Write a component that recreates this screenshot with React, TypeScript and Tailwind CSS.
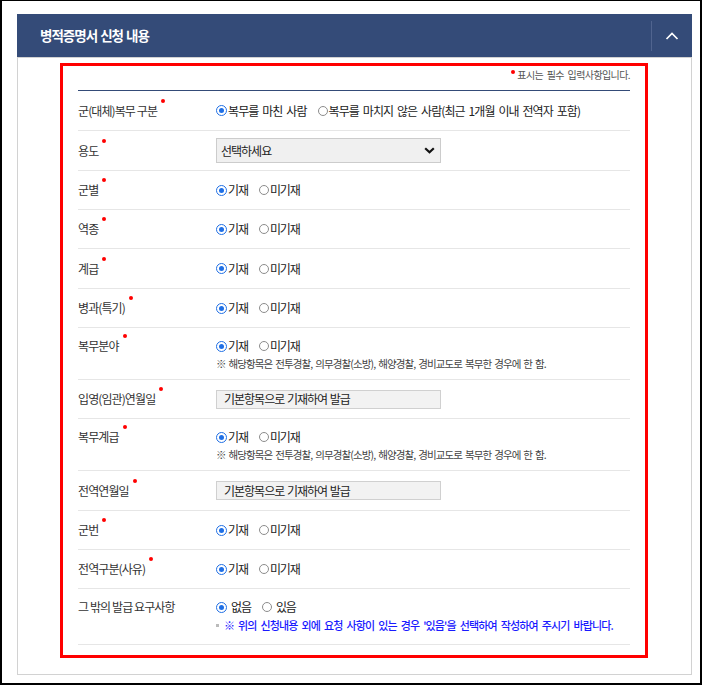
import React from "react";

const F = "font-['Noto_Sans_CJK_KR','Noto_Sans',sans-serif]";

function Dot() {
  return (
    <span className="relative -top-[3px] ml-[4px] inline-block h-[4px] w-[4px] rounded-full bg-[#ff0000] align-top" />
  );
}

function Radio({ checked }: { checked?: boolean }) {
  return checked ? (
    <span className="inline-flex h-[11px] w-[11px] shrink-0 items-center justify-center rounded-full border-[1.5px] border-[#1f6fe5] bg-white">
      <span className="h-[5px] w-[5px] rounded-full bg-[#1f6fe5]" />
    </span>
  ) : (
    <span className="inline-block h-[10px] w-[10px] shrink-0 rounded-full border border-[#8c8c8c] bg-white" />
  );
}

function Opt({ checked, label }: { checked?: boolean; label: string }) {
  return (
    <span className="inline-flex items-center">
      <Radio checked={checked} />
      <span className="ml-[1px]">{label}</span>
    </span>
  );
}

function YesNo() {
  return (
    <div className="flex items-center gap-[11px] text-[12px] leading-[18px] tracking-[-1.1px] text-[#222]">
      <Opt checked label="기재" />
      <Opt label="미기재" />
    </div>
  );
}

function Note() {
  return (
    <div className="mt-[2px] text-[10.5px] leading-[13px] tracking-[-0.9px] text-[#444] [word-spacing:1.5px]">
      ※ 해당항목은 전투경찰, 의무경찰(소방), 해양경찰, 경비교도로 복무한 경우에 한 함.
    </div>
  );
}

function Row({
  label,
  req = true,
  h,
  top = false,
  children,
}: {
  label: string;
  req?: boolean;
  h: string;
  top?: boolean;
  children: React.ReactNode;
}) {
  return (
    <div
      className={`flex border-b border-[#e6e6e6] ${h} ${top ? "items-start pt-[9px]" : "items-center"}`}
    >
      <div className="w-[138px] shrink-0 text-[12px] leading-[18px] tracking-[-0.9px] text-[#333]">
        {label}
        {req && <Dot />}
      </div>
      <div className="min-w-0 flex-1">{children}</div>
    </div>
  );
}

function Box({ text }: { text: string }) {
  return (
    <div className="flex h-[19px] w-[225px] items-center border border-[#d0d0d0] bg-[#f2f2f2] pl-[7px] text-[12px] tracking-[-1px] text-[#222] [word-spacing:1px]">
      {text}
    </div>
  );
}

export default function App() {
  return (
    <div
      className={`${F} h-[685px] w-[702px] border-b-2 border-l-2 border-r-2 border-t border-black bg-white pl-[15px] pt-[13px]`}
    >
      <div className="w-[675px]">
        <div className="flex h-[43px] items-center bg-[#344b78]">
          <div className="flex-1 pl-[23px] text-[13.5px] font-bold tracking-[-1px] text-white [word-spacing:1px]">
            병적증명서 신청 내용
          </div>
          <div className="flex h-[30px] w-[41px] items-center justify-center border-l border-[#50648f]">
            <svg width="14" height="8" viewBox="0 0 14 8" fill="none">
              <path d="M1.5 7 L7 1.5 L12.5 7" stroke="#ffffff" strokeWidth="1.7" />
            </svg>
          </div>
        </div>
        <div className="border border-[#d2d2d2] pb-[16px] pl-[42px] pt-[5px]">
          <div className="w-[588px] border-[3px] border-[#ff0000] px-[15px] pb-[10px]">
            <div className="flex items-center justify-end pt-[2px] text-[10px] leading-[14px] tracking-[-0.6px] text-[#555] [word-spacing:2px]">
              <span className="relative -top-[3px] mr-[2px] inline-block h-[4px] w-[4px] rounded-full bg-[#ff0000]" />
              표시는 필수 입력사항입니다.
            </div>
            <div className="mt-[8px] border-t border-[#344b78]" />

            <Row label="군(대체)복무 구분" h="h-[40px]">
              <div className="flex items-center gap-[11px] text-[12px] leading-[18px] tracking-[-0.9px] text-[#222] [word-spacing:2px]">
                <Opt checked label="복무를 마친 사람" />
                <Opt label="복무를 마치지 않은 사람(최근 1개월 이내 전역자 포함)" />
              </div>
            </Row>

            <Row label="용도" h="h-[40px]">
              <div className="flex h-[25px] w-[225px] items-center justify-between border border-[#cccccc] bg-[#f0f0f0] pl-[4px] pr-[5px] text-[12px] tracking-[-1px] text-[#222]">
                <span>선택하세요</span>
                <svg width="11" height="7" viewBox="0 0 11 7" fill="none">
                  <path d="M1.2 1.2 L5.5 5.3 L9.8 1.2" stroke="#111111" strokeWidth="2.2" />
                </svg>
              </div>
            </Row>

            <Row label="군별" h="h-[39px]">
              <YesNo />
            </Row>
            <Row label="역종" h="h-[39px]">
              <YesNo />
            </Row>
            <Row label="계급" h="h-[40px]">
              <YesNo />
            </Row>
            <Row label="병과(특기)" h="h-[39px]">
              <YesNo />
            </Row>
            <Row label="복무분야" h="h-[52px]" top>
              <YesNo />
              <Note />
            </Row>
            <Row label="입영(임관)연월일" h="h-[39px]">
              <Box text="기본항목으로 기재하여 발급" />
            </Row>
            <Row label="복무계급" h="h-[52px]" top>
              <YesNo />
              <Note />
            </Row>
            <Row label="전역연월일" h="h-[40px]">
              <Box text="기본항목으로 기재하여 발급" />
            </Row>
            <Row label="군번" h="h-[39px]">
              <YesNo />
            </Row>
            <Row label="전역구분(사유)" h="h-[39px]">
              <YesNo />
            </Row>
            <Row label="그 밖의 발급 요구사항" req={false} h="h-[56px]" top>
              <div className="flex items-center gap-[11px] text-[12px] leading-[18px] tracking-[-1.1px] text-[#222]">
                <span className="inline-flex items-center gap-[4px]">
                  <Radio checked />
                  <span>없음</span>
                </span>
                <span className="inline-flex items-center gap-[4px]">
                  <Radio />
                  <span>있음</span>
                </span>
              </div>
              <div className="mt-[2px] flex items-center text-[11px] leading-[14px] tracking-[-0.85px] text-[#1a1aff] [word-spacing:2.3px]">
                <span className="mr-[5px] inline-block h-[3px] w-[3px] bg-[#bbbbbb]" />
                <span className="font-medium">
                  ※ 위의 신청내용 외에 요청 사항이 있는 경우 '있음'을 선택하여 작성하여 주시기 바랍니다.
                </span>
              </div>
            </Row>
          </div>
        </div>
      </div>
    </div>
  );
}
